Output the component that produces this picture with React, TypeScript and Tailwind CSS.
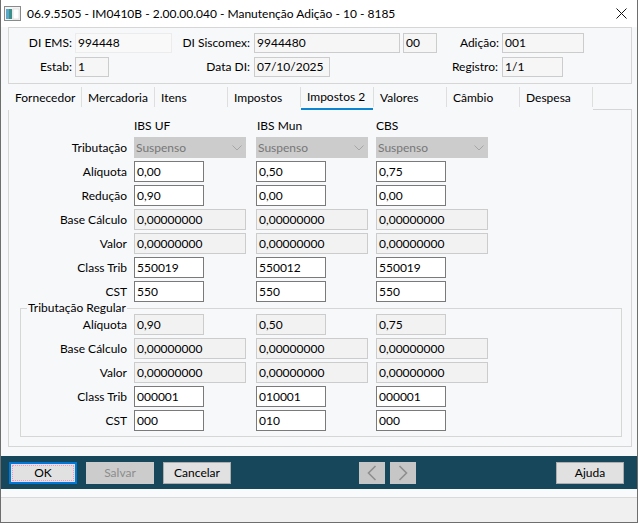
import clsx from 'clsx';

type Cell = { v: string; w: 'short' | 'long'; ro?: boolean };

const main: { label: string; cells: Cell[] }[] = [
  { label: 'Alíquota', cells: [{ v: '0,00', w: 'short' }, { v: '0,50', w: 'short' }, { v: '0,75', w: 'short' }] },
  { label: 'Redução', cells: [{ v: '0,90', w: 'short' }, { v: '0,00', w: 'short' }, { v: '0,00', w: 'short' }] },
  { label: 'Base Cálculo', cells: [{ v: '0,00000000', w: 'long', ro: true }, { v: '0,00000000', w: 'long', ro: true }, { v: '0,00000000', w: 'long', ro: true }] },
  { label: 'Valor', cells: [{ v: '0,00000000', w: 'long', ro: true }, { v: '0,00000000', w: 'long', ro: true }, { v: '0,00000000', w: 'long', ro: true }] },
  { label: 'Class Trib', cells: [{ v: '550019', w: 'short' }, { v: '550012', w: 'short' }, { v: '550019', w: 'short' }] },
  { label: 'CST', cells: [{ v: '550', w: 'short' }, { v: '550', w: 'short' }, { v: '550', w: 'short' }] },
];

const regular: { label: string; cells: Cell[] }[] = [
  { label: 'Alíquota', cells: [{ v: '0,90', w: 'short', ro: true }, { v: '0,50', w: 'short', ro: true }, { v: '0,75', w: 'short', ro: true }] },
  { label: 'Base Cálculo', cells: [{ v: '0,00000000', w: 'long', ro: true }, { v: '0,00000000', w: 'long', ro: true }, { v: '0,00000000', w: 'long', ro: true }] },
  { label: 'Valor', cells: [{ v: '0,00000000', w: 'long', ro: true }, { v: '0,00000000', w: 'long', ro: true }, { v: '0,00000000', w: 'long', ro: true }] },
  { label: 'Class Trib', cells: [{ v: '000001', w: 'short' }, { v: '010001', w: 'short' }, { v: '000001', w: 'short' }] },
  { label: 'CST', cells: [{ v: '000', w: 'short' }, { v: '010', w: 'short' }, { v: '000', w: 'short' }] },
];

const tabs = ['Fornecedor', 'Mercadoria', 'Itens', 'Impostos', 'Impostos 2', 'Valores', 'Câmbio', 'Despesa'];

function Field({ cell }: { cell: Cell }) {
  return (
    <div
      className={clsx(
        'h-[21px] flex items-center pl-[2px] border text-black',
        cell.w === 'short' ? 'w-[70px]' : 'w-[112px]',
        cell.ro ? 'border-[#cccccc] bg-[#f2f2f2]' : 'border-[#7a7a7a] bg-white',
      )}
    >
      {cell.v}
    </div>
  );
}

function HeadField({ v, className, faint }: { v: string; className: string; faint?: boolean }) {
  return (
    <div
      className={clsx(
        'h-[20px] flex items-center pl-[2px] border text-black',
        faint ? 'border-[#ececec] bg-[#f9f9f9]' : 'border-[#cccccc] bg-[#f6f6f6]',
        className,
      )}
    >
      {v}
    </div>
  );
}

function Select() {
  return (
    <div className="w-[112px] h-[21px] flex items-center justify-between pl-[2px] pr-[4px] bg-[#cccccc] text-[#777777]">
      <span>Suspenso</span>
      <svg width="10" height="6" viewBox="0 0 10 6" fill="none">
        <path d="M0.5 0.5 L5 5 L9.5 0.5" stroke="#a6a6a6" strokeWidth="1" />
      </svg>
    </div>
  );
}

function Rows({ rows, cols }: { rows: { label: string; cells: Cell[] }[]; cols: string }) {
  return (
    <div className={clsx('grid gap-y-[3px] auto-rows-[21px]', cols)}>
      {rows.map(r => (
        <div key={r.label} className="contents">
          <div className="flex items-center justify-end pr-[7px]">{r.label}</div>
          {r.cells.map((c, i) => (
            <div key={i}>
              <Field cell={c} />
            </div>
          ))}
        </div>
      ))}
    </div>
  );
}

function Button({ label, primary, disabled }: { label: string; primary?: boolean; disabled?: boolean }) {
  if (primary) {
    return (
      <button className="w-[68px] h-[22px] border-2 border-[#0078d7] bg-[#e1e1e1] p-[1px]">
        <div className="w-full h-full border border-dotted border-[#ff8fc8] flex items-center justify-center text-black">
          {label}
        </div>
      </button>
    );
  }
  return (
    <button
      className={clsx(
        'w-[68px] h-[22px] border flex items-center justify-center',
        disabled ? 'bg-[#cccccc] border-[#cccccc] text-[#8c8c8c]' : 'bg-[#e1e1e1] border-[#adadad] text-black',
      )}
    >
      {label}
    </button>
  );
}

function Arrow({ dir }: { dir: 'left' | 'right' }) {
  return (
    <div className="w-[26px] h-[22px] bg-[#c6c6c6] flex items-center justify-center">
      <svg width="10" height="16" viewBox="0 0 10 16" fill="none">
        <path
          d={dir === 'left' ? 'M8.5 1 L1.5 8 L8.5 15' : 'M1.5 1 L8.5 8 L1.5 15'}
          stroke="#8e8e8e"
          strokeWidth="1.6"
        />
      </svg>
    </div>
  );
}

export default function App() {
  return (
    <div className="w-[638px] h-[523px] flex flex-col border-x border-b border-[#6e6e6e] bg-[#f7f8fa] overflow-hidden text-[12px] leading-none font-['Segoe_UI',Lato,'Liberation_Sans',sans-serif] text-black">
      {/* title bar */}
      <div className="h-[27px] shrink-0 bg-white flex items-center pl-[3px] pr-[10px]">
        <svg width="17" height="15" viewBox="0 0 17 15" className="mr-[6px]">
          <rect x="0.5" y="0.5" width="16" height="14" fill="#f4f4f4" stroke="#8a8a8a" />
          <rect x="2" y="3" width="6" height="10" fill="#3d8f8a" />
          <rect x="2" y="3" width="3" height="10" fill="#5aa7c9" />
          <rect x="9" y="3" width="6" height="10" fill="#ffffff" stroke="#c8c8c8" strokeWidth="0.5" />
        </svg>
        <span className="text-[12px]">06.9.5505 - IM0410B - 2.00.00.040 - Manutenção Adição - 10 - 8185</span>
        <div className="flex-1" />
        <svg width="11" height="11" viewBox="0 0 11 11">
          <path d="M0.5 0.5 L10.5 10.5 M10.5 0.5 L0.5 10.5" stroke="#111" strokeWidth="1" />
        </svg>
      </div>

      <div className="pl-[7px] pr-[5px] flex flex-col">
        {/* header */}
        <div className="border border-[#d6d6d6] pt-[5px] pb-[6px] flex flex-col gap-[4px]">
          <div className="flex items-center">
            <div className="w-[66px] text-right pr-[3px]">DI EMS:</div>
            <HeadField v="994448" className="w-[97px]" faint />
            <div className="w-[82px] text-right pr-[4px]">DI Siscomex:</div>
            <HeadField v="9944480" className="w-[146px]" />
            <HeadField v="00" className="w-[34px] ml-[3px]" />
            <div className="w-[65px] text-right pr-[3px]">Adição:</div>
            <HeadField v="001" className="w-[82px]" />
          </div>
          <div className="flex items-center">
            <div className="w-[66px] text-right pr-[3px]">Estab:</div>
            <HeadField v="1" className="w-[34px]" />
            <div className="w-[145px] text-right pr-[4px]">Data DI:</div>
            <HeadField v="07/10/2025" className="w-[76px]" />
            <div className="w-[172px] text-right pr-[4px]">Registro:</div>
            <HeadField v="1/1" className="w-[61px]" />
          </div>
        </div>

        {/* tabs */}
        <div className="h-[26px] flex pl-[1px]">
          {tabs.map(t => (
            <div key={t} className="w-[73px] flex">
              <div
                className={clsx(
                  'flex-1 flex items-center pl-[6px] pt-[2px]',
                  t === 'Impostos 2' && 'border-b-2 border-[#0c84cf]',
                )}
              >
                {t}
              </div>
              <div className="w-px h-[20px] self-center bg-[#dedede]" />
            </div>
          ))}
          <div className="flex-1 border-b border-[#d6d6d6]" />
        </div>

        {/* panel */}
        <div className="border-x border-b border-[#d6d6d6] pt-[7px] pb-[9px] flex flex-col">
          <div className="grid grid-cols-[125px_122px_120px_1fr] grid-rows-[17px_21px] gap-y-[3px]">
            <div />
            <div className="flex items-center">IBS UF</div>
            <div className="flex items-center pl-[1px]">IBS Mun</div>
            <div className="flex items-center">CBS</div>
            <div className="flex items-center justify-end pr-[7px]">Tributação</div>
            <div><Select /></div>
            <div><Select /></div>
            <div><Select /></div>
          </div>
          <div className="mt-[3px]">
            <Rows rows={main} cols="grid-cols-[125px_122px_120px_1fr]" />
          </div>
          <fieldset className="ml-[11px] mr-[9px] border border-[#d6d6d6] px-[6px] pb-[5px]">
            <legend className="px-[1px] leading-[12px]">Tributação Regular</legend>
            <Rows rows={regular} cols="grid-cols-[107px_122px_120px_1fr]" />
          </fieldset>
        </div>
      </div>

      {/* footer */}
      <div className="mt-[9px] h-[33px] shrink-0 bg-[#17475a] flex items-center pl-[8px] pr-[13px]">
        <Button label="OK" primary />
        <div className="ml-[9px]"><Button label="Salvar" disabled /></div>
        <div className="ml-[9px]"><Button label="Cancelar" /></div>
        <div className="ml-[128px] flex gap-[5px]">
          <Arrow dir="left" />
          <Arrow dir="right" />
        </div>
        <div className="flex-1" />
        <Button label="Ajuda" />
      </div>
      <div className="h-[8px] shrink-0 bg-[#f9fafc]" />
      <div className="flex-1 border-t border-[#dadada] bg-[#f0f0f0]" />
    </div>
  );
}
